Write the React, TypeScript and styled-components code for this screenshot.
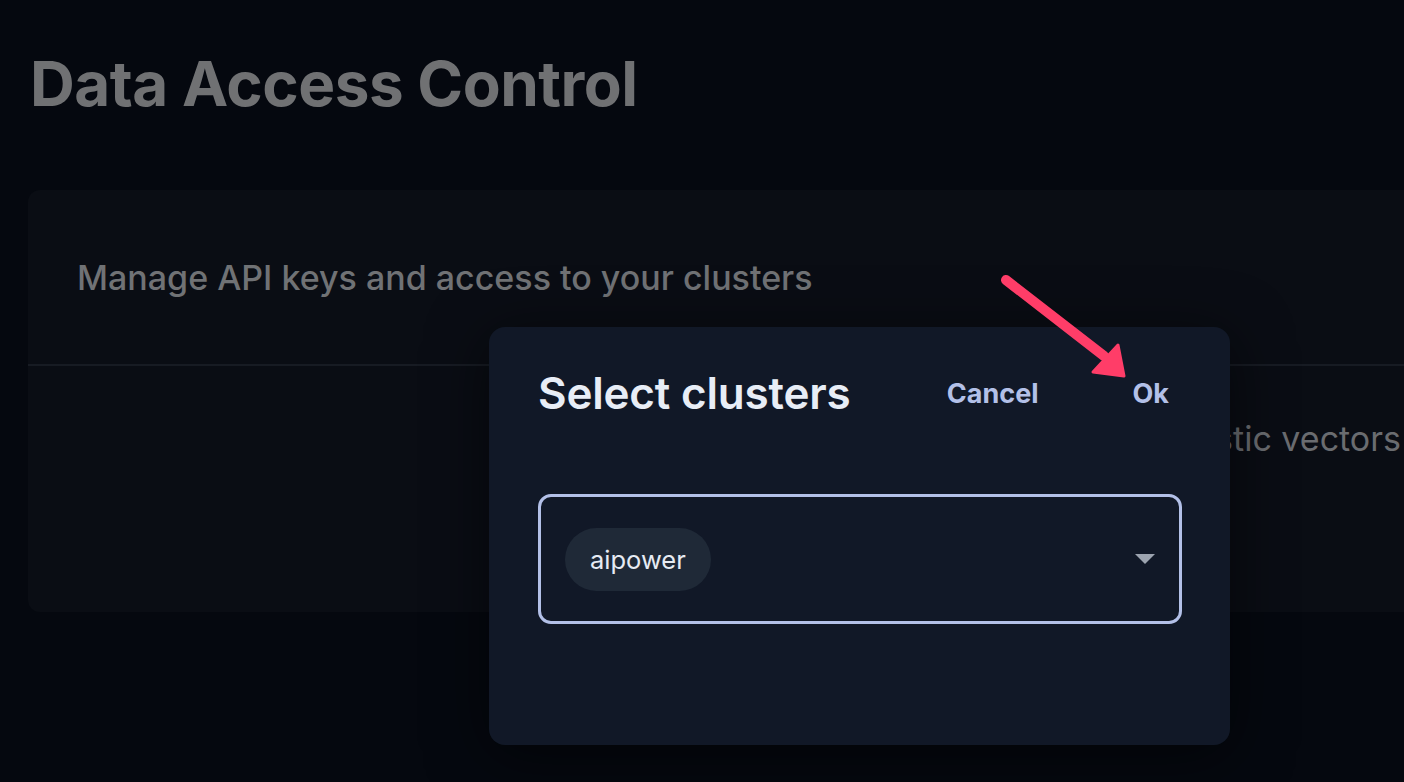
import React from "react";
import styled, { createGlobalStyle } from "styled-components";

const Global = createGlobalStyle`
  html, body { margin: 0; padding: 0; background: #05080f; }
  body { font-family: Inter, "Noto Sans", "Liberation Sans", sans-serif; overflow: hidden; }
  #root { width: 1404px; height: 782px; }
`;

const Page = styled.div`
  position: relative;
  width: 1404px;
  height: 782px;
  background: #05080f;
  overflow: hidden;
  box-sizing: border-box;
  padding: 48px 0 0 28px;
`;

const Title = styled.h1`
  margin: 0 0 0 2px;
  font-size: 62px;
  line-height: 72px;
  font-weight: 700;
  letter-spacing: -0.5px;
  color: #707173;
`;

const Card = styled.section`
  margin-top: 70px;
  width: 1420px;
  height: 422px;
  background: #0a0d14;
  border-radius: 12px;
  display: flex;
  flex-direction: column;
`;

const CardHeader = styled.div`
  height: 176px;
  box-sizing: border-box;
  padding: 0 0 0 49px;
  display: flex;
  align-items: center;
  border-bottom: 2px solid #171b23;
`;

const Subtitle = styled.p`
  margin: 0;
  font-size: 34px;
  font-weight: 500;
  color: #707275;
`;

const CardBody = styled.div`
  display: flex;
  justify-content: flex-end;
  padding: 52px 47px 0 0;
`;

const BodyText = styled.p`
  margin: 0;
  font-size: 34px;
  font-weight: 400;
  color: #6a6c70;
  white-space: nowrap;
`;

const Dialog = styled.div`
  position: absolute;
  left: 489px;
  top: 327px;
  width: 741px;
  height: 418px;
  box-sizing: border-box;
  background: #111827;
  border-radius: 16px;
  padding: 36px 61px 0 49px;
  box-shadow: 0 10px 60px rgba(0, 0, 0, 0.55);
`;

const DialogHeader = styled.div`
  display: flex;
  align-items: center;
  height: 60px;
`;

const DialogTitle = styled.h2`
  margin: 0;
  flex: 1;
  font-size: 44px;
  font-weight: 600;
  color: #e8edf6;
  letter-spacing: -0.2px;
`;

const TextButton = styled.button<{ $gap?: number }>`
  background: none;
  border: none;
  padding: 0;
  margin-left: ${(p) => p.$gap ?? 0}px;
  font-family: inherit;
  font-size: 27px;
  font-weight: 700;
  color: #b3c0e8;
  cursor: pointer;
`;

const Select = styled.div`
  margin: 71px -13px 0 0;
  height: 130px;
  box-sizing: border-box;
  border: 3px solid #b3c0e8;
  border-radius: 13px;
  display: flex;
  align-items: center;
  padding: 0 24px 0 24px;
`;

const Chip = styled.span`
  display: inline-flex;
  align-items: center;
  height: 63px;
  padding: 0 25px;
  border-radius: 32px;
  background: #1f2937;
  color: #e6ebf3;
  font-size: 25.5px;
  font-weight: 400;
`;

const Spacer = styled.div`
  flex: 1;
`;

const Caret = styled.svg`
  width: 20px;
  height: 10px;
  margin-right: 0;
`;

const ArrowOverlay = styled.svg`
  position: absolute;
  left: 0;
  top: 0;
  width: 1404px;
  height: 782px;
  pointer-events: none;
`;

export default function App() {
  return (
    <>
      <Global />
      <Page>
        <Title>Data Access Control</Title>
        <Card>
          <CardHeader>
            <Subtitle>Manage API keys and access to your clusters</Subtitle>
          </CardHeader>
          <CardBody>
            <BodyText>Create keys to query your elastic vectors</BodyText>
          </CardBody>
        </Card>
        <Dialog role="dialog">
          <DialogHeader>
            <DialogTitle>Select clusters</DialogTitle>
            <TextButton>Cancel</TextButton>
            <TextButton $gap={94}>Ok</TextButton>
          </DialogHeader>
          <Select>
            <Chip>aipower</Chip>
            <Spacer />
            <Caret viewBox="0 0 20 10">
              <path d="M0 0 L20 0 L10 10 Z" fill="#9ca3af" />
            </Caret>
          </Select>
        </Dialog>
        <ArrowOverlay viewBox="0 0 1404 782">
          <line x1="1006" y1="280" x2="1104" y2="356" stroke="#ff3d68" strokeWidth="10" strokeLinecap="round" />
          <path d="M1124 376 L1093 372 L1093 372 L1118 345 Z" fill="#ff3d68" stroke="#ff3d68" strokeWidth="3" strokeLinejoin="round" />
        </ArrowOverlay>
      </Page>
    </>
  );
}
